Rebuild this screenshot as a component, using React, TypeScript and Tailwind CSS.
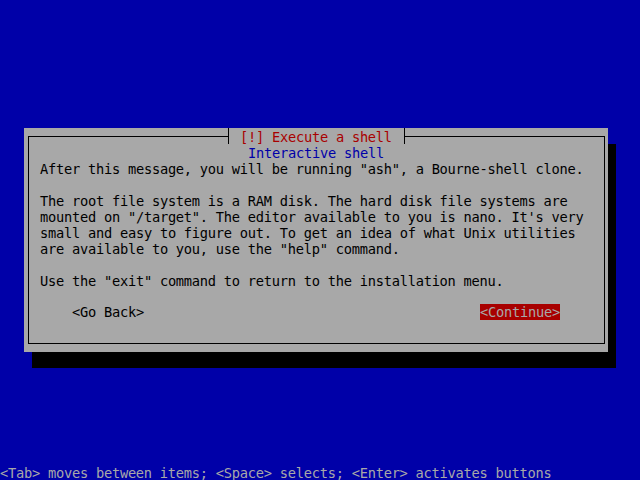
const body = [
  'After this message, you will be running "ash", a Bourne-shell clone.',
  "",
  "The root file system is a RAM disk. The hard disk file systems are",
  'mounted on "/target". The editor available to you is nano. It\'s very',
  "small and easy to figure out. To get an idea of what Unix utilities",
  'are available to you, use the "help" command.',
  "",
  'Use the "exit" command to return to the installation menu.',
  "",
];

export default function App() {
  return (
    <div className="w-[640px] h-[480px] bg-[#0000a8] flex flex-col font-['DejaVu_Sans_Mono',monospace] text-[13.7px] leading-4 tracking-[-0.2481px] whitespace-pre">
      {/* dialog box with its drop shadow */}
      <div className="ml-[24px] mt-[128px] w-[584px] h-[224px] bg-[#a8a8a8] pt-[8px] pl-[4px] pr-[3px] shadow-[8px_16px_0_0_#000]">
        <div className="w-[577px] h-[208px] border border-black flex flex-col">
          {/* title sits on the top border */}
          <div className="mt-[-9px] ml-[199px] w-[177px] h-4 pt-px bg-[#a8a8a8] border-x border-black pl-[3px] text-[#a80000]">
            {" [!] Execute a shell "}
          </div>
          <div className="ml-[219px] h-4 pt-px text-[#0000a8]">Interactive shell</div>
          {body.map((line, i) => (
            <div key={i} className="pl-[11px] h-4 pt-px text-black">
              {line}
            </div>
          ))}
          <div className="flex justify-between pl-[43px] pr-[44px] h-4">
            <span className="text-black">{"<Go Back>"}</span>
            <span className="bg-[#a80000] text-[#a8a8a8]">{"<Continue>"}</span>
          </div>
        </div>
      </div>
      <div className="mt-auto h-4 pt-px text-[#a8a8a8]">
        {"<Tab> moves between items; <Space> selects; <Enter> activates buttons"}
      </div>
    </div>
  );
}
